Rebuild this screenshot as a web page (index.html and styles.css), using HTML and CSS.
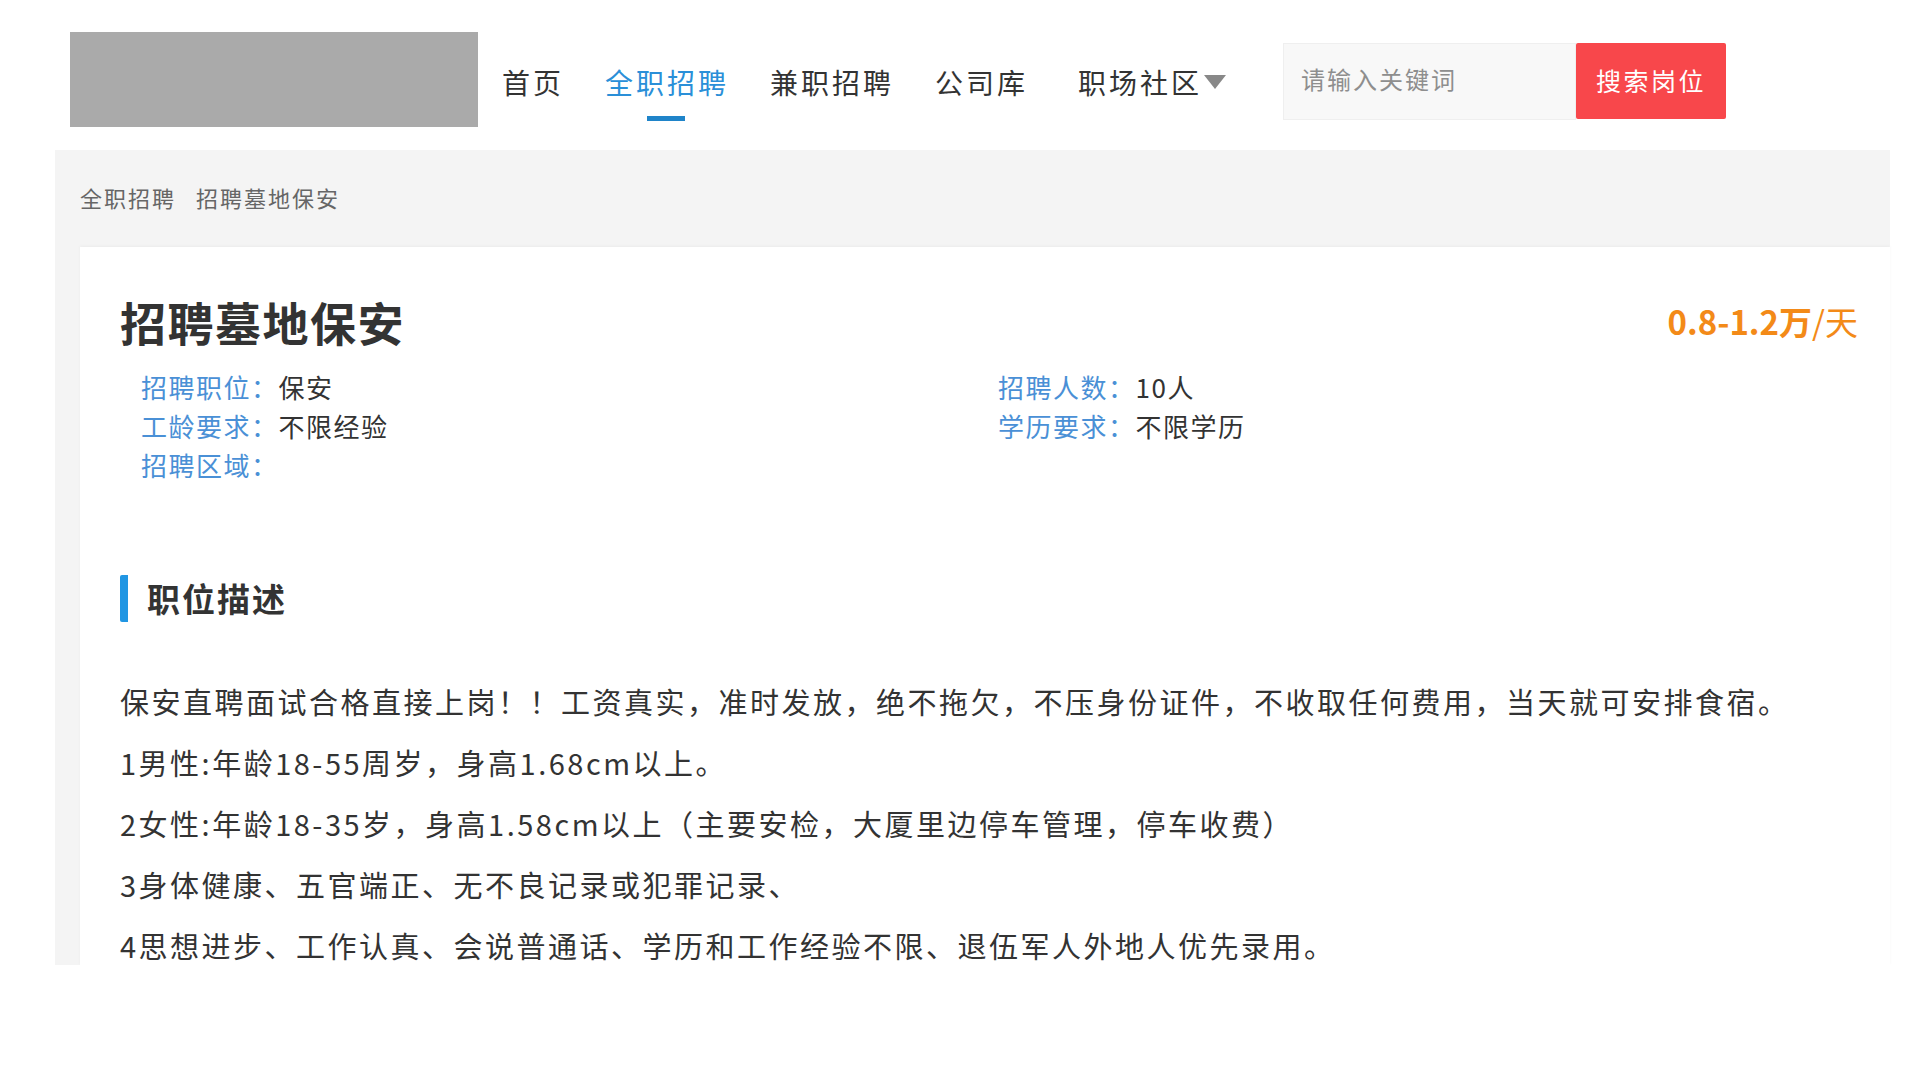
FILE: index.html
```html
<!DOCTYPE html>
<html lang="zh-CN">
<head>
    <meta charset="UTF-8">
    <meta name="viewport" content="width=device-width, initial-scale=1.0">
    <title>招聘墓地保安</title>
    <link rel="stylesheet" href="styles.css">
</head>
<body>

    <header class="header">
        <div class="logo"></div>
        <nav class="nav">
            <a href="#">首页</a>
            <a href="#" class="active">全职招聘</a>
            <a href="#">兼职招聘</a>
            <a href="#">公司库</a>
            <a href="#" class="dropdown">职场社区<span class="caret"></span></a>
        </nav>
        <form class="search" onsubmit="return false">
            <input type="text" placeholder="请输入关键词">
            <button type="submit">搜索岗位</button>
        </form>
    </header>

    <main class="main">
        <div class="crumbs">
            <a href="#">全职招聘</a>
            <span>招聘墓地保安</span>
        </div>

        <section class="job-card">
            <div class="job-head">
                <h1>招聘墓地保安</h1>
                <div class="salary">0.8-1.2万<span>/天</span></div>
            </div>

            <ul class="job-info">
                <li><label>招聘职位：</label>保安</li>
                <li><label>招聘人数：</label>10人</li>
                <li><label>工龄要求：</label>不限经验</li>
                <li><label>学历要求：</label>不限学历</li>
                <li><label>招聘区域：</label></li>
            </ul>

            <h2 class="section-title">职位描述</h2>
            <div class="job-desc">
                <p>保安直聘面试合格直接上岗！！工资真实，准时发放，绝不拖欠，不压身份证件，不收取任何费用，当天就可安排食宿。</p>
                <p>1男性:年龄18-55周岁，身高1.68cm以上。</p>
                <p>2女性:年龄18-35岁，身高1.58cm以上（主要安检，大厦里边停车管理，停车收费）</p>
                <p>3身体健康、五官端正、无不良记录或犯罪记录、</p>
                <p>4思想进步、工作认真、会说普通话、学历和工作经验不限、退伍军人外地人优先录用。</p>
            </div>
        </section>
    </main>

</body>
</html>
```

FILE: styles.css
```css
:root {
    --blue: #2a8fd8;
    --label-blue: #4a90d6;
    --red: #f8474b;
    --orange: #f38a18;
    --text: #333333;
    --gray-bg: #f4f4f4;
}

* {
    margin: 0;
    padding: 0;
    box-sizing: border-box;
}

body {
    font-family: "Noto Sans CJK SC", "Noto Sans", sans-serif;
    background: #ffffff;
    color: var(--text);
}

a {
    color: inherit;
    text-decoration: none;
}

/* Header */
.header {
    display: flex;
    align-items: flex-start;
    height: 150px;
    padding: 32px 0 0 70px;
}

.logo {
    width: 408px;
    height: 95px;
    background: #aaaaaa;
}

.nav {
    display: flex;
    margin: 30px 0 0 24px;
}

.nav a {
    position: relative;
    font-size: 28px;
    letter-spacing: 3px;
    line-height: 40px;
    color: #333;
    margin-right: 41px;
}

.nav a.active {
    color: var(--blue);
}

.nav a.active::after {
    content: "";
    position: absolute;
    left: 50%;
    top: 54px;
    width: 38px;
    height: 5px;
    margin-left: -20px;
    background: #1f84c9;
}

.nav a.dropdown {
    margin: 0 0 0 9px;
    display: flex;
    align-items: center;
}

.caret {
    display: inline-block;
    width: 0;
    height: 0;
    margin-left: 2px;
    border-left: 11px solid transparent;
    border-right: 11px solid transparent;
    border-top: 14px solid #888;
}

.search {
    display: flex;
    margin: 11px 0 0 57px;
}

.search input {
    width: 293px;
    height: 77px;
    padding: 0 0 6px 17px;
    border: 1px solid #efefef;
    background: #f8f8f8;
    font-family: inherit;
    font-size: 24px;
    letter-spacing: 2px;
    color: #333;
    outline: none;
}

.search input::placeholder {
    color: #8e8e8e;
}

.search button {
    width: 150px;
    height: 76px;
    padding-bottom: 3px;
    border: none;
    border-radius: 2px;
    background: var(--red);
    color: #fff;
    font-family: inherit;
    font-size: 25px;
    letter-spacing: 2.5px;
    cursor: pointer;
}

/* Main */
.main {
    margin: 0 30px 0 55px;
    padding: 32px 0 0 25px;
    background: var(--gray-bg);
}

.crumbs {
    display: flex;
    gap: 20px;
    font-size: 22px;
    letter-spacing: 2px;
    line-height: 30px;
    color: #666;
    margin-bottom: 35px;
}

/* Job card */
.job-card {
    background: #fff;
    padding: 44px 32px 0 40px;
    box-shadow: 0 -1px 3px rgba(0, 0, 0, 0.04);
}

.job-head {
    display: flex;
    justify-content: space-between;
    align-items: center;
}

.job-head h1 {
    font-size: 46px;
    letter-spacing: 1.5px;
    line-height: 60px;
    font-weight: bold;
    color: #333;
}

.salary {
    font-size: 33px;
    font-weight: bold;
    color: var(--orange);
}

.salary span {
    font-weight: normal;
}

.job-info {
    list-style: none;
    display: grid;
    grid-template-columns: 857px 1fr;
    margin-top: 16px;
    padding-left: 21px;
}

.job-info li {
    font-size: 26px;
    letter-spacing: 1.5px;
    line-height: 39px;
    color: #333;
}

.job-info label {
    color: var(--label-blue);
}

.section-title {
    margin-top: 91px;
    border-left: 8px solid #2196e3;
    border-radius: 2px;
    padding-left: 19px;
    font-size: 33px;
    letter-spacing: 2px;
    line-height: 47px;
    font-weight: bold;
    color: #333;
}

.job-desc {
    margin-top: 59px;
}

.job-desc p {
    font-size: 29px;
    letter-spacing: 2.5px;
    line-height: 40px;
    margin-bottom: 21px;
    color: #333;
}

.job-desc p:last-child {
    margin-bottom: 0;
}
```
